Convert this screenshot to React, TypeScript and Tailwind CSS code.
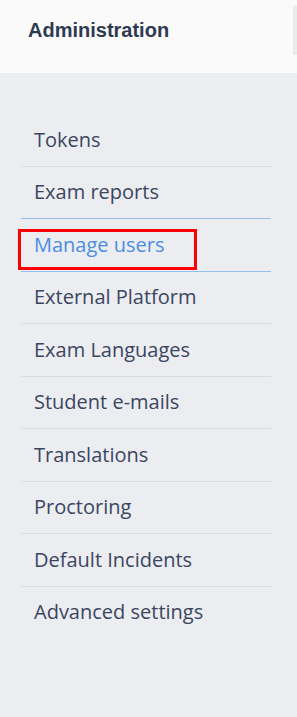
import React from 'react';

const items = [
  'Tokens',
  'Exam reports',
  'Manage users',
  'External Platform',
  'Exam Languages',
  'Student e-mails',
  'Translations',
  'Proctoring',
  'Default Incidents',
  'Advanced settings',
];

const ACTIVE = 'Manage users';

function NavItem({ label, active, last, beforeActive }: { label: string; active: boolean; last: boolean; beforeActive: boolean }) {
  let border = 'border-b border-[#dcdcdc]';
  if (last) border = 'border-b border-transparent';
  if (beforeActive || active) border = 'border-b border-[#94bfea]';
  return (
    <li className={`relative flex h-[52.5px] items-center px-[13px] ${border}`}>
      <span className={`text-[20px] leading-none ${active ? 'text-[#4a8ee0]' : 'text-[#3a4660]'}`}>{label}</span>
      {active && (
        <div className="pointer-events-none absolute left-[-3px] top-[10px] h-[41px] w-[179px] border-[3px] border-[#ff0000]" />
      )}
    </li>
  );
}

export default function App() {
  const activeIndex = items.indexOf(ACTIVE);
  return (
    <div className="flex min-h-screen w-full flex-col bg-[#ecedf1] font-['Open_Sans',sans-serif]">
      <header className="flex h-[73px] justify-between bg-[#fafafa]">
        <h2 className="pl-[28px] pt-[18px] font-['Liberation_Sans',Arial,sans-serif] text-[20px] font-bold leading-[24px] text-[#2f3a52]">
          Administration
        </h2>
        <div className="mt-[6px] h-[49px] w-[4px] bg-[#ebebeb]" />
      </header>
      <nav className="pl-[21px] pr-[26px] pt-[41px]">
        <ul>
          {items.map((label, i) => (
            <NavItem
              key={label}
              label={label}
              active={i === activeIndex}
              beforeActive={i === activeIndex - 1}
              last={i === items.length - 1}
            />
          ))}
        </ul>
      </nav>
    </div>
  );
}
